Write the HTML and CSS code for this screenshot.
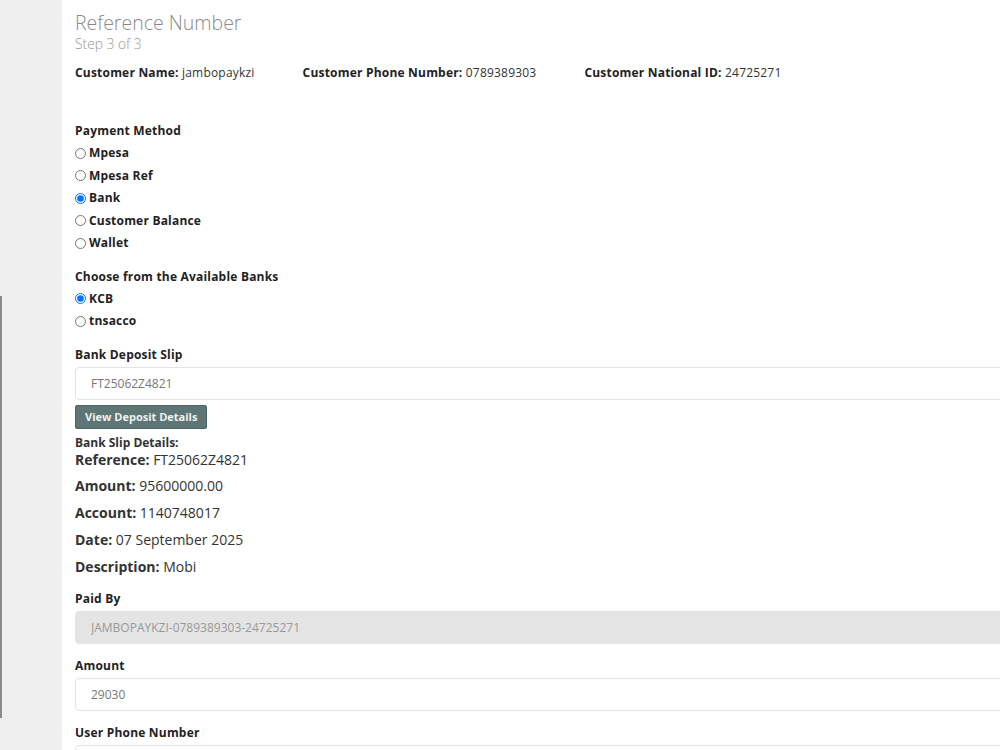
FILE: index.html
```html
<!DOCTYPE html>
<html>
<head>
<meta charset="utf-8">
<link rel="stylesheet" href="styles.css">
</head>
<body>
<div class="page">
  <aside class="sidebar"><div class="edge"></div></aside>
  <main class="content">
    <header class="heading">
      <h1 class="title">Reference Number</h1>
      <div class="step">Step 3 of 3</div>
    </header>
    <div class="customer">
      <span class="cust-item"><b>Customer Name:</b> jambopaykzi</span>
      <span class="cust-item"><b>Customer Phone Number:</b> 0789389303</span>
      <span class="cust-item"><b>Customer National ID:</b> 24725271</span>
    </div>

    <div class="group methods">
      <div class="label">Payment Method</div>
      <label class="radio"><input type="radio" name="pm"> Mpesa</label>
      <label class="radio"><input type="radio" name="pm"> Mpesa Ref</label>
      <label class="radio"><input type="radio" name="pm" checked> Bank</label>
      <label class="radio"><input type="radio" name="pm"> Customer Balance</label>
      <label class="radio"><input type="radio" name="pm"> Wallet</label>
    </div>

    <div class="group banks">
      <div class="label">Choose from the Available Banks</div>
      <label class="radio"><input type="radio" name="bank" checked> KCB</label>
      <label class="radio"><input type="radio" name="bank"> tnsacco</label>
    </div>

    <div class="group slip">
      <div class="label">Bank Deposit Slip</div>
      <input class="field" type="text" value="FT25062Z4821">
      <button class="btn">View Deposit Details</button>
    </div>

    <div class="details">
      <div class="details-title">Bank Slip Details:</div>
      <p class="detail first"><b>Reference:</b> FT25062Z4821</p>
      <p class="detail"><b>Amount:</b> 95600000.00</p>
      <p class="detail"><b>Account:</b> 1140748017</p>
      <p class="detail"><b>Date:</b> 07 September 2025</p>
      <p class="detail"><b>Description:</b> Mobi</p>
    </div>

    <div class="group field-group paid">
      <div class="label">Paid By</div>
      <input class="field readonly" type="text" value="JAMBOPAYKZI-0789389303-24725271" readonly>
    </div>
    <div class="group field-group">
      <div class="label">Amount</div>
      <input class="field" type="text" value="29030">
    </div>
    <div class="group field-group">
      <div class="label">User Phone Number</div>
      <input class="field" type="text" value="">
    </div>
  </main>
</div>
</body>
</html>
```
FILE: styles.css
```css
html, body {
  margin: 0;
  padding: 0;
  height: 100%;
  overflow: hidden;
  background: #ffffff;
}
body {
  font-family: "Open Sans", "Liberation Sans", sans-serif;
  color: #222;
}
.page {
  display: flex;
  min-height: 100%;
}
.sidebar {
  width: 62px;
  flex: none;
  background: #efefef;
  min-height: 750px;
}
.edge {
  width: 2px;
  height: 422px;
  margin-top: 296px;
  background: #8a8a8a;
}
.content {
  flex: none;
  width: 1100px;
  padding: 10px 0 0 13px;
}
.title {
  margin: 0;
  font-size: 19.5px;
  font-weight: 300;
  color: #8a8a8a;
  line-height: 26px;
}
.step {
  font-size: 13.8px;
  font-weight: 300;
  color: #999;
  line-height: 19px;
  margin-top: -2px;
}
.customer {
  display: flex;
  gap: 48px;
  margin-top: 12px;
  font-size: 12px;
  line-height: 16px;
  color: #333;
  letter-spacing: 0.2px;
}
.customer b { color: #222; }
.group { display: flex; flex-direction: column; align-items: flex-start; }
.methods { margin-top: 42px; }
.banks { margin-top: 14px; }
.slip { margin-top: 14px; }
.label {
  font-size: 12px;
  font-weight: 700;
  line-height: 16px;
  margin-bottom: 4px;
  color: #222;
  letter-spacing: 0.2px;
}
.radio {
  display: flex;
  align-items: center;
  font-size: 12px;
  font-weight: 700;
  line-height: 16px;
  height: 22.5px;
  color: #222;
  letter-spacing: 0.2px;
}
.radio input {
  margin: 0 3px 0 0;
  width: 11px;
  height: 11px;
}
.methods .label, .banks .label { margin-bottom: 3px; }
.field {
  box-sizing: border-box;
  width: 1000px;
  height: 33px;
  border: 1px solid #e2e2e2;
  border-radius: 4px;
  padding: 0 15px;
  font-family: inherit;
  font-size: 12px;
  color: #777;
  background: #fff;
  outline: none;
}
.field.readonly {
  background: #e4e4e4;
  border-color: #e4e4e4;
  color: #999;
}
.btn {
  margin-top: 5px;
  height: 24px;
  padding: 0 9px;
  background: #5d7675;
  border: 1px solid #4c6463;
  border-radius: 2px;
  color: #eef2f2;
  font-family: inherit;
  font-size: 11px;
  font-weight: 700;
}
.details { margin-top: 7px; }
.details-title {
  font-size: 12px;
  font-weight: 700;
  line-height: 14px;
  color: #333;
}
.detail {
  margin: 0;
  font-size: 14px;
  line-height: 27px;
  color: #333;
}
.detail.first { line-height: 20px; margin-bottom: 2px; }
.detail b { color: #333; }
.field-group { margin-top: 14px; }
.field-group.paid { margin-top: 11px; }
```
